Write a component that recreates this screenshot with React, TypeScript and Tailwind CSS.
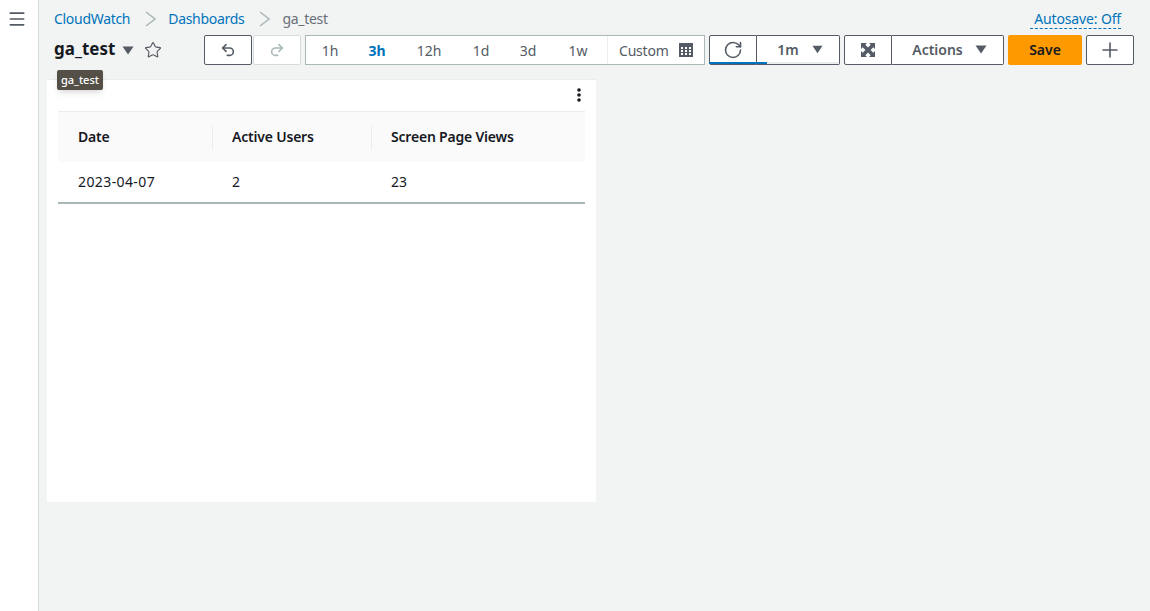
import { Menu, Plus, RotateCcw, Star, Undo2, Redo2 } from 'lucide-react';

const ranges = [
  { label: '1h', width: 'w-[48px]' },
  { label: '3h', width: 'w-[46px]', active: true },
  { label: '12h', width: 'w-[58px]' },
  { label: '1d', width: 'w-[46px]' },
  { label: '3d', width: 'w-[48px]' },
  { label: '1w', width: 'w-[52px]' },
];

function Caret({ className }: { className: string }) {
  return (
    <svg viewBox="0 0 12 9" className={className}>
      <path d="M0.5 0.5h11L6 8.5z" fill="currentColor" />
    </svg>
  );
}

function Chevron() {
  return (
    <svg viewBox="0 0 11 16" className="ml-[15px] mr-[12px] h-[16px] w-[11px] text-[#aab7b8]">
      <path d="M1 1l9 7-9 7" fill="none" stroke="currentColor" strokeWidth="1.5" />
    </svg>
  );
}

function CalendarIcon() {
  return (
    <svg viewBox="0 0 14 14" className="ml-[10px] h-[14px] w-[14px] text-[#545b64]">
      <path fill="currentColor" fillRule="evenodd" d="M0 0h14v14H0zM2 4v2h2V4zM6 4v2h2V4zM10 4v2h2V4zM2 7v2h2V7zM6 7v2h2V7zM10 7v2h2V7zM2 10v2h2v-2zM6 10v2h2v-2zM10 10v2h2v-2z" />
    </svg>
  );
}

function ExpandIcon() {
  return (
    <svg viewBox="0 0 14 14" className="h-[14px] w-[14px] text-[#545b64]">
      <path fill="currentColor" d="M0 0h6L4.300 1.700 7 4.400l2.700-2.700L8 0h6v6l-1.700-1.700L9.600 7l2.700 2.700L14 8v6H8l1.700-1.700L7 9.600l-2.700 2.700L6 14H0V8l1.700 1.700L4.400 7 1.700 4.300 0 6z" />
    </svg>
  );
}

export default function App() {
  return (
    <div className="flex h-[611px] w-[1150px] overflow-hidden bg-[#f2f3f3] font-['Noto_Sans','Open_Sans',sans-serif] text-[14px] text-[#16191f]">
      <aside className="flex w-[39px] shrink-0 justify-center border-r border-[#d5dbdb] bg-white pr-[4px] pt-[9px]">
        <Menu className="h-[20px] w-[20px] text-[#545b64]" strokeWidth={2} />
      </aside>

      <main className="relative min-w-0 flex-1">
        <nav className="flex h-[35px] items-center pl-[15px] pr-[29px] pt-[2px] text-[14px] tracking-[-0.3px]">
          <span className="text-[#0073bb]">CloudWatch</span>
          <Chevron />
          <span className="text-[#0073bb]">Dashboards</span>
          <Chevron />
          <span className="text-[#687078]">ga_test</span>
          <span className="ml-auto border-b border-dashed border-[#0073bb] pl-[4px] leading-[19px] tracking-[-0.15px] text-[#0073bb]">
            Autosave: Off
          </span>
        </nav>

        <div className="flex h-[30px] items-center pl-[15px] font-semibold">
          <div className="flex w-[150px] items-center">
            <span className="pb-[2px] text-[17px] font-bold leading-[22px]">ga_test</span>
            <Caret className="ml-[7px] h-[9px] w-[12px] text-[#545b64]" />
            <Star className="ml-[10px] h-[18px] w-[18px] text-[#545b64]" strokeWidth={1.5} />
          </div>

          <button className="flex h-[30px] w-[48px] items-center justify-center rounded-[2px] border border-[#545b64] bg-white">
            <Undo2 className="h-[16px] w-[16px] text-[#545b64]" strokeWidth={2.4} />
          </button>
          <button className="ml-[1px] flex h-[30px] w-[48px] items-center justify-center rounded-[2px] border border-[#d5dbdb] bg-white">
            <Redo2 className="h-[16px] w-[16px] text-[#aab7b8]" strokeWidth={2.4} />
          </button>

          <div className="ml-[4px] flex h-[30px] w-[400px] items-center border border-[#aab7b8] bg-white font-normal text-[#545b64]">
            {ranges.map((range) => (
              <span
                key={range.label}
                className={`${range.width} text-center ${range.active ? 'font-bold text-[#0073bb]' : ''}`}
              >
                {range.label}
              </span>
            ))}
            <div className="ml-[3px] flex h-full items-center border-l border-[#eaeded] pl-[11px]">
              <span className="tracking-[-0.2px]">Custom</span>
              <CalendarIcon />
            </div>
          </div>

          <div className="relative ml-[4px] flex h-[30px] text-[#545b64]">
            <button className="flex w-[48px] items-center justify-center rounded-l-[2px] border border-[#545b64] bg-white">
              <RotateCcw className="h-[20px] w-[20px] -scale-x-100 text-[#545b64]" strokeWidth={1.9} />
            </button>
            <button className="flex w-[83px] items-center justify-center gap-[13px] rounded-r-[2px] border border-l-0 border-[#545b64] bg-white pb-[2px] pl-[4px] font-semibold">
              1m
              <Caret className="h-[9px] w-[11px]" />
            </button>
            <div className="absolute bottom-[1px] left-[1px] h-[2px] w-[129px] bg-[#eaeded]" />
            <div className="absolute bottom-[1px] left-0 h-[2px] w-[58px] bg-[#0073bb]" />
          </div>

          <button className="ml-[4px] flex h-[30px] w-[48px] items-center justify-center rounded-l-[2px] border border-[#545b64] bg-white">
            <ExpandIcon />
          </button>
          <button className="flex h-[30px] w-[112px] items-center justify-center gap-[12px] rounded-r-[2px] border border-l-0 border-[#545b64] bg-white pb-[2px] pl-[4px] font-semibold text-[#545b64]">
            Actions
            <Caret className="h-[9px] w-[12px]" />
          </button>
          <button className="ml-[4px] h-[30px] w-[74px] rounded-[2px] bg-[#ff9900] pb-[2px] font-semibold text-[#16191f]">
            Save
          </button>
          <button className="ml-[4px] flex h-[30px] w-[48px] items-center justify-center rounded-[2px] border border-[#545b64] bg-white">
            <Plus className="h-[24px] w-[24px] text-[#545b64]" strokeWidth={1.6} />
          </button>
        </div>

        <section className="ml-[8px] mt-[14px] h-[423px] w-[549px] border-t border-[#eaeded] bg-white px-[11px] pt-[8px]">
          <div className="flex h-[23px] justify-end pr-[4px]">
            <svg viewBox="0 0 4 14" className="h-[14px] w-[4px] text-[#16191f]">
              <circle cx="2" cy="2" r="1.8" fill="currentColor" />
              <circle cx="2" cy="7" r="1.8" fill="currentColor" />
              <circle cx="2" cy="12" r="1.8" fill="currentColor" />
            </svg>
          </div>
          <div className="grid h-[51px] grid-cols-[155px_159px_1fr] items-center border-t border-[#eaeded] bg-[#fafafa] font-semibold tracking-[-0.2px]">
            <div className="h-[25px] border-r border-[#eaeded] pl-[20px] leading-[23px]">Date</div>
            <div className="h-[25px] border-r border-[#eaeded] pl-[19px] leading-[23px]">Active Users</div>
            <div className="h-[25px] pl-[19px] leading-[23px]">Screen Page Views</div>
          </div>
          <div className="grid h-[42px] grid-cols-[155px_159px_1fr] items-center border-b-2 border-[#aab7b8] pb-[2px]">
            <div className="pl-[20px] tracking-[0.4px]">2023-04-07</div>
            <div className="pl-[19px]">2</div>
            <div className="pl-[19px]">23</div>
          </div>
        </section>

        <div className="absolute left-[18px] top-[70px] rounded-[2px] bg-[#545048] px-[4px] py-[2px] text-[11px] font-medium leading-[16px] text-white shadow-md">
          ga_test
        </div>
      </main>
    </div>
  );
}
